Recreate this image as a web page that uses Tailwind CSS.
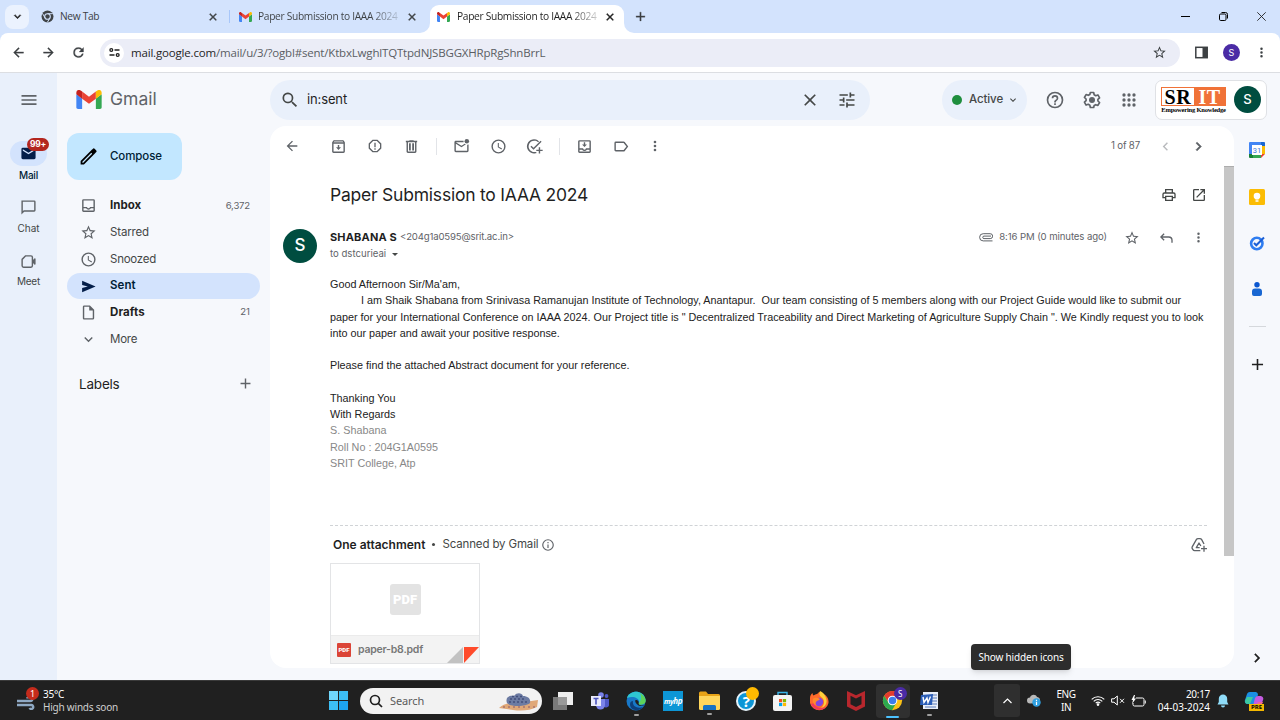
<!DOCTYPE html>
<html lang="en">
<head>
<meta charset="utf-8">
<title>Paper Submission to IAAA 2024 - Gmail</title>
<script src="https://cdn.jsdelivr.net/npm/@tailwindcss/browser@4"></script>
</head>
<body class="w-[1280px] h-[720px] overflow-hidden bg-[#f6f8fc] font-['Inter',sans-serif] text-[#1f1f1f] flex flex-col">
<svg class="hidden">
  <symbol id="gmail" viewBox="0 0 24 18"><path fill="#4285f4" d="M0 4v12.400C0 17.300.7 18 1.600 18H5.500V8z"/><path fill="#34a853" d="M18.500 18h3.900c.9 0 1.600-.7 1.600-1.600V4l-5.500 4z"/><path fill="#ea4335" d="M5.500 1.500 12 6.400l6.500-4.900V8.200L12 13 5.500 8.200z"/><path fill="#c5221f" d="M0 2.500C0 .4 2.400-.8 4.100.5L5.500 1.500v6.700L0 4.100z"/><path fill="#fbbc04" d="M18.500 1.500 19.900.5C21.600-.8 24 .4 24 2.500v1.600l-5.500 4.100z"/></symbol>
  <symbol id="chrome" viewBox="0 0 24 24"><circle cx="12" cy="12" r="11" fill="#fbc116"/><path fill="#e33b2e" d="M2.500 6.500A11 11 0 0 1 21.500 6.500L12 7 7.500 14.500z"/><path fill="#2da94f" d="M2.500 6.500A11 11 0 0 0 11.500 23l5-8.500L12 17l-4.500-2.500z"/><circle cx="12" cy="12" r="5.500" fill="#fff"/><circle cx="12" cy="12" r="4.300" fill="#3b7ded"/></symbol>
  <symbol id="x" viewBox="0 0 24 24"><path d="M19 6.410 17.590 5 12 10.590 6.410 5 5 6.410 10.590 12 5 17.590 6.410 19 12 13.410 17.590 19 19 17.590 13.410 12z"/></symbol>
  <symbol id="plus" viewBox="0 0 24 24"><path d="M19 13h-6v6h-2v-6H5v-2h6V5h2v6h6z"/></symbol>
  <symbol id="back" viewBox="0 0 24 24"><path d="M20 11H7.830l5.590-5.590L12 4l-8 8 8 8 1.410-1.410L7.830 13H20z"/></symbol>
  <symbol id="reload" viewBox="0 0 24 24"><path d="M17.650 6.350A7.960 7.960 0 0 0 12 4a8 8 0 1 0 7.730 10h-2.080A6 6 0 1 1 12 6c1.660 0 3.140.69 4.220 1.780L13 11h7V4z"/></symbol>
  <symbol id="star" viewBox="0 0 24 24"><path d="m22 9.240-7.190-.62L12 2 9.190 8.630 2 9.240l5.460 4.730L5.820 21 12 17.270 18.180 21l-1.630-7.030zM12 15.400l-3.760 2.270 1-4.280-3.320-2.880 4.380-.38L12 6.100l1.710 4.040 4.380.38-3.320 2.880 1 4.280z"/></symbol>
  <symbol id="dots" viewBox="0 0 24 24"><path d="M12 8a2 2 0 1 0 0-4 2 2 0 0 0 0 4m0 2a2 2 0 1 0 0 4 2 2 0 0 0 0-4m0 6a2 2 0 1 0 0 4 2 2 0 0 0 0-4"/></symbol>
  <symbol id="menu" viewBox="0 0 24 24"><path d="M3 18h18v-2H3zm0-5h18v-2H3zm0-7v2h18V6z"/></symbol>
  <symbol id="search" viewBox="0 0 24 24"><path d="M15.500 14h-.79l-.28-.27a6.500 6.500 0 1 0-.7.700l.27.280v.79l5 4.990L20.490 19zm-6 0a4.500 4.500 0 1 1 0-9 4.500 4.500 0 0 1 0 9"/></symbol>
  <symbol id="tune" viewBox="0 0 24 24"><path d="M3 17v2h6v-2zM3 5v2h10V5zm10 16v-2h8v-2h-8v-2h-2v6zM7 9v2H3v2h4v2h2V9zm14 4v-2H11v2zm-6-4h2V7h4V5h-4V3h-2z"/></symbol>
  <symbol id="down" viewBox="0 0 24 24"><path d="M7.410 8.590 12 13.170l4.590-4.580L18 10l-6 6-6-6z"/></symbol>
  <symbol id="help" viewBox="0 0 24 24"><path d="M11 18h2v-2h-2zm1-16a10 10 0 1 0 0 20 10 10 0 0 0 0-20m0 18a8 8 0 1 1 0-16 8 8 0 0 1 0 16m0-14a4 4 0 0 0-4 4h2a2 2 0 1 1 4 0c0 2-3 1.750-3 5h2c0-2.250 3-2.500 3-5a4 4 0 0 0-4-4"/></symbol>
  <symbol id="gear" viewBox="0 0 24 24"><path fill="none" stroke="currentColor" stroke-width="2" stroke-linejoin="round" d="M10 3h4l.6 2.700 1.900 1.100 2.600-.9 2 3.500-2 1.800v2l2 1.800-2 3.500-2.600-.9-1.900 1.100L14 21h-4l-.6-2.700-1.900-1.100-2.600.9-2-3.500 2-1.800v-2l-2-1.800 2-3.500 2.600.9 1.900-1.100z"/><circle cx="12" cy="12" r="3.600"/></symbol>
  <symbol id="apps" viewBox="0 0 24 24"><path d="M6 8a2 2 0 1 0 0-4 2 2 0 0 0 0 4m6 12a2 2 0 1 0 0-4 2 2 0 0 0 0 4m-6 0a2 2 0 1 0 0-4 2 2 0 0 0 0 4m0-6a2 2 0 1 0 0-4 2 2 0 0 0 0 4m6 0a2 2 0 1 0 0-4 2 2 0 0 0 0 4m6-6a2 2 0 1 0 0-4 2 2 0 0 0 0 4m-6 0a2 2 0 1 0 0-4 2 2 0 0 0 0 4m6 6a2 2 0 1 0 0-4 2 2 0 0 0 0 4m0 6a2 2 0 1 0 0-4 2 2 0 0 0 0 4"/></symbol>
  <symbol id="clock" viewBox="0 0 24 24"><path d="M12 2a10 10 0 1 0 0 20 10 10 0 0 0 0-20m0 18a8 8 0 1 1 0-16 8 8 0 0 1 0 16m.5-13H11v6l5.200 3.200.8-1.300-4.500-2.700z"/></symbol>
  <symbol id="inbox" viewBox="0 0 24 24"><path d="M19 3H5a2 2 0 0 0-2 2v14c0 1.100.9 2 2 2h14a2 2 0 0 0 2-2V5a2 2 0 0 0-2-2m0 16H5v-3h3.560a4 4 0 0 0 6.880 0H19zm0-5h-5a2 2 0 1 1-4 0H5V5h14z"/></symbol>
</svg>

<!-- Tab strip -->
<div class="h-[33px] shrink-0 bg-[#d3e3fd] flex items-end font-['Open_Sans',sans-serif] text-[10.2px] text-[#3c4043]">
  <div class="w-[430px] h-[33px] bg-white">
    <div class="flex h-[33px] w-[430px] rounded-br-[10px] bg-[#d3e3fd] items-center">
      <div class="ml-[5px] size-[24px] rounded-[8px] bg-[#ebf2fe] flex items-center justify-center"><svg class="size-[13px] fill-[#1f1f1f] stroke-[#1f1f1f]"><use href="#down"/></svg></div>
      <svg class="ml-[12px] size-[13px]" viewBox="0 0 24 24"><circle cx="12" cy="12" r="11" fill="#3f4347"/><circle cx="12" cy="12" r="5.200" fill="none" stroke="#d3e3fd" stroke-width="2"/><path stroke="#d3e3fd" stroke-width="1.800" d="M12 6.800h9.800M7.500 14.600 2.600 6.200M16.500 14.600l-4.900 8.400"/></svg>
      <span class="ml-[6px] w-[140px] tracking-[-0.310px]">New Tab</span>
      <svg class="ml-[7px] size-[12px] fill-[#3c4043] stroke-[#3c4043]"><use href="#x"/></svg>
      <span class="ml-[10px] w-px h-[13px] bg-[#a8c7fa]"></span>
      <svg class="ml-[9px] w-[13px] h-[10px]"><use href="#gmail"/></svg>
      <span class="ml-[6px] w-[140px] whitespace-nowrap tracking-[-0.310px] bg-linear-to-r from-[#3c4043] from-80% to-[#3c4043]/20 bg-clip-text text-transparent">Paper Submission to IAAA 2024</span>
      <svg class="ml-[8px] size-[12px] fill-[#3c4043] stroke-[#3c4043]"><use href="#x"/></svg>
    </div>
  </div>
  <div class="h-[28px] w-[194px] rounded-t-[9px] bg-white flex items-center pb-[5px] text-[#1f1f1f]">
    <svg class="ml-[7px] w-[13px] h-[10px]"><use href="#gmail"/></svg>
    <span class="ml-[7px] w-[140px] whitespace-nowrap tracking-[-0.310px] bg-linear-to-r from-[#1f1f1f] from-80% to-[#1f1f1f]/20 bg-clip-text text-transparent">Paper Submission to IAAA 2024</span>
    <svg class="ml-[7px] size-[12px] fill-[#1f1f1f] stroke-[#1f1f1f]"><use href="#x"/></svg>
  </div>
  <div class="h-[33px] flex-1 bg-white">
    <div class="flex h-[33px] rounded-bl-[10px] bg-[#d3e3fd] items-center">
      <svg class="ml-[9px] size-[15px] fill-[#3c4043] stroke-[#3c4043] stroke-[.5]"><use href="#plus"/></svg>
      <div class="ml-auto mr-[14px] flex items-center gap-[29px]">
        <span class="w-[9px] h-px bg-black"></span>
        <svg class="size-[9px]" viewBox="0 0 9 9" fill="none" stroke="#000"><rect x=".5" y="2" width="6.500" height="6.500" rx="1.200"/><path d="M2.500.5H6.500a2 2 0 0 1 2 2V6.500"/></svg>
        <svg class="size-[9px]" viewBox="0 0 9 9" stroke="#222" stroke-width=".9"><path d="m.3.3 8.400 8.400M8.700.3.300 8.700"/></svg>
      </div>
    </div>
  </div>
</div>

<!-- Address bar -->
<div class="h-[40px] shrink-0 bg-[#d3e3fd]"><div class="h-[40px] bg-white rounded-t-[8px] border-b border-[#dcdee2] flex items-center">
  <svg class="ml-[11px] size-[15px] fill-[#3c4043] stroke-[#3c4043] stroke-[.5]"><use href="#back"/></svg>
  <svg class="ml-[15px] size-[15px] fill-[#3c4043] stroke-[#3c4043] stroke-[.5] rotate-180"><use href="#back"/></svg>
  <svg class="ml-[15px] size-[15px] fill-[#3c4043] stroke-[#3c4043] stroke-[.5]"><use href="#reload"/></svg>
  <div class="ml-[14px] w-[1080px] h-[28px] rounded-full bg-[#ebedf7] flex items-center">
    <div class="ml-[4px] size-[20px] rounded-full bg-white flex items-center justify-center"><svg class="size-[11px]" viewBox="0 0 11 11" fill="none" stroke="#1f1f1f" stroke-width="1.300"><circle cx="2.300" cy="3" r="1.400"/><path d="M5.500 3h5M.5 8h5"/><circle cx="8.700" cy="8" r="1.400"/></svg></div>
    <span class="ml-[7px] font-['Open_Sans',sans-serif] text-[11.5px] tracking-[-0.180px] text-[#5a5d63] whitespace-nowrap"><span class="text-[#1f1f1f]">mail.google.com</span>/mail/u/3/?ogbl#sent/KtbxLwghlTQTtpdNJSBGGXHRpRgShnBrrL</span>
    <svg class="ml-auto mr-[13px] size-[15px] fill-[#3c4043]"><use href="#star"/></svg>
  </div>
  <svg class="ml-[15px] size-[13px]" viewBox="0 0 13 13"><rect x=".8" y="1.300" width="11.400" height="10.400" fill="none" stroke="#3c4043" stroke-width="1.500"/><path fill="#3c4043" d="M7.500 1h5v11h-5z"/></svg>
  <span class="ml-[15px] size-[17px] rounded-full bg-[#4a2ba5] text-white text-[9px] flex items-center justify-center">S</span>
  <svg class="ml-[14px] size-[15px] fill-[#3c4043]"><use href="#dots"/></svg>
</div></div>

<div class="flex h-[607px] shrink-0">
  <!-- App rail -->
  <div class="w-[57px] bg-[#e9f0fb] flex flex-col items-center text-[10px] text-[#444746]">
    <svg class="mt-[17px] size-[20px] fill-[#5f6368]"><use href="#menu"/></svg>
    <div class="relative mt-[31px] w-[37px] h-[25px] rounded-full bg-[#d3e3fd] flex items-center justify-center">
      <svg class="size-[17px] fill-[#041e49]" viewBox="0 0 24 24"><path d="M20 4H4a2 2 0 0 0-2 2v12c0 1.100.9 2 2 2h16a2 2 0 0 0 2-2V6a2 2 0 0 0-2-2m0 4-8 5-8-5V6l8 5 8-5z"/></svg>
      <span class="absolute left-[17px] -top-[3px] w-[22px] h-[13px] rounded-full bg-[#b3261e] text-white font-bold text-[8.500px] leading-[13px] text-center tracking-[-0.200px]">99+</span>
    </div>
    <span class="mt-[2px] leading-[14px] text-[#001d35] font-medium tracking-[-0.200px]">Mail</span>
    <svg class="mt-[17px] size-[17px] fill-[#5f6368]" viewBox="0 0 24 24"><path d="M2 2v20l4-4h14a2 2 0 0 0 2-2V4a2 2 0 0 0-2-2zm2 2h16v12H5.200L4 17.200z"/></svg>
    <span class="mt-[5px] leading-[14px]">Chat</span>
    <svg class="mt-[18px] size-[17px]" viewBox="0 0 24 24" fill="none" stroke="#5f6368" stroke-width="2" stroke-linejoin="round"><path d="M8 4h7.500a2 2 0 0 1 2 2v12a2 2 0 0 1-2 2H5a2 2 0 0 1-2-2V9z"/><path d="m18 11.500 3-3v7l-3-3z" fill="#5f6368"/></svg>
    <span class="mt-[4px] leading-[14px] tracking-[-0.200px]">Meet</span>
  </div>

  <!-- Folder column -->
  <div class="w-[213px] pl-[10px] flex flex-col text-[11.500px]">
    <div class="h-[53px] flex items-center pl-[9px]">
      <svg class="w-[26px] h-[19px]"><use href="#gmail"/></svg>
      <span class="ml-[8px] text-[17.500px] text-[#5f6368]">Gmail</span>
    </div>
    <div class="mt-[7px] w-[115px] h-[47px] rounded-[12px] bg-[#c2e7ff] flex items-center text-[#001d35] font-medium">
      <svg class="ml-[11px] size-[21px]" viewBox="0 0 24 24"><path d="M3 17.200V21h3.800L19.600 8.200l-3.800-3.800zM6 19H5v-1L15.200 7.800l1 1zM20.900 6.900a1.400 1.400 0 0 0 0-1.900l-1.900-1.900a1.400 1.400 0 0 0-1.900 0L14 6.200 17.800 10z"/></svg>
      <span class="ml-[11px] tracking-[-0.090px]">Compose</span>
    </div>
    <div class="mt-[12.600px] w-[193px] flex flex-col text-[#444746] fill-[#5f6368]">
      <div class="h-[26.700px] flex items-center pl-[13px] pr-[10px] text-[#1f1f1f] font-bold"><svg class="size-[17px]"><use href="#inbox"/></svg><span class="ml-[13px]">Inbox</span><span class="ml-auto text-[9.600px] font-normal tracking-[-0.200px] text-[#5f6368]">6,372</span></div>
      <div class="h-[26.700px] flex items-center pl-[13px]"><svg class="size-[17px]"><use href="#star"/></svg><span class="ml-[13px] tracking-[-0.160px]">Starred</span></div>
      <div class="h-[26.700px] flex items-center pl-[13px]"><svg class="size-[17px]"><use href="#clock"/></svg><span class="ml-[13px] tracking-[-0.250px]">Snoozed</span></div>
      <div class="h-[26.700px] flex items-center pl-[13px] rounded-full bg-[#d3e3fd] text-[#001d35] font-semibold"><svg class="size-[17px] fill-[#041e49]" viewBox="0 0 24 24"><path d="M3 20v-6l8-2-8-2V4l19 8z"/></svg><span class="ml-[13px] tracking-[0.100px]">Sent</span></div>
      <div class="h-[26.700px] flex items-center pl-[13px] pr-[10px] text-[#1f1f1f] font-bold"><svg class="size-[17px]" viewBox="0 0 24 24"><path d="M14 2H6a2 2 0 0 0-2 2v16c0 1.100.9 2 2 2h12a2 2 0 0 0 2-2V8zM6 20V4h7v5h5v11z"/></svg><span class="ml-[13px] tracking-[0.100px]">Drafts</span><span class="ml-auto text-[9.600px] font-normal text-[#5f6368]">21</span></div>
      <div class="h-[26.700px] flex items-center pl-[13px]"><svg class="size-[17px]"><use href="#down"/></svg><span class="ml-[13px] tracking-[-0.250px]">More</span></div>
    </div>
    <div class="mt-[21px] h-[20px] pl-[12px] pr-[16px] flex items-center text-[13.500px] tracking-[-0.200px] text-[#1f1f1f]">Labels<svg class="ml-auto size-[17px] fill-[#5f6368]"><use href="#plus"/></svg></div>
  </div>

  <!-- Search header and message -->
  <div class="flex-1 flex flex-col">
    <div class="h-[53px] flex items-center fill-[#444746]">
      <div class="w-[600px] h-[40px] rounded-full bg-[#e9f0fb] flex items-center">
        <svg class="ml-[10px] size-[20px]"><use href="#search"/></svg>
        <span class="ml-[7px] text-[13px] tracking-[-0.130px]">in:sent</span>
        <svg class="ml-auto size-[20px]"><use href="#x"/></svg>
        <svg class="ml-[17px] mr-[13px] size-[20px]"><use href="#tune"/></svg>
      </div>
      <div class="ml-[72px] w-[85px] h-[40px] rounded-full bg-[#e9f0fb] flex items-center">
        <span class="ml-[10px] size-[10px] rounded-full bg-[#1e8e3e]"></span>
        <span class="ml-[7px] text-[11.500px] tracking-[-0.100px] text-[#444746] font-medium">Active</span>
        <svg class="ml-[4px] size-[12px]"><use href="#down"/></svg>
      </div>
      <svg class="ml-[18px] size-[20px] fill-[#5f6368]"><use href="#help"/></svg>
      <svg class="ml-[17px] size-[20px] fill-[#5f6368] text-[#5f6368]"><use href="#gear"/></svg>
      <svg class="ml-[17px] size-[20px] fill-[#5f6368]"><use href="#apps"/></svg>
      <div class="ml-[16px] w-[112px] h-[40px] rounded-[7px] bg-white border border-[#dfe1e5] flex items-center">
        <div class="ml-[5px] w-[65px] h-[26px] flex flex-col items-center font-['Liberation_Serif',serif]">
          <div class="w-[65px] h-[19px] flex border border-[#f07238] text-[20px] leading-[18px] font-bold"><span class="w-[32px] text-center text-black tracking-[0.800px]">SR</span><span class="flex-1 bg-[#f07238] text-white text-center tracking-[0.400px]">IT</span></div>
          <span class="text-[6.500px] leading-[8px] text-black font-bold whitespace-nowrap tracking-[-0.200px]">Empowering Knowledge</span>
        </div>
        <span class="ml-[8px] size-[27px] rounded-full bg-[#004d40] text-white text-[13px] font-medium flex items-center justify-center">S</span>
      </div>
    </div>

    <div class="flex">
      <div class="w-[964px] h-[542px] rounded-[16px] bg-white overflow-hidden flex flex-col">
        <div class="h-[40px] shrink-0 flex items-center fill-[#5f6368]">
          <svg class="ml-[14px] size-[16px]"><use href="#back"/></svg>
          <div class="ml-[20px] flex items-center">
            <span class="w-[36.700px] flex justify-center"><svg class="size-[17px]" viewBox="0 0 24 24"><path d="M20.500 5.200 19.200 3.500A1.500 1.500 0 0 0 18 3H6a1.500 1.500 0 0 0-1.200.5L3.500 5.200A2 2 0 0 0 3 6.500V19c0 1.100.9 2 2 2h14a2 2 0 0 0 2-2V6.500a2 2 0 0 0-.5-1.300M19 19H5V8h14zM5 6l1-1h12l1 1zM11 10v3H8.500l3.500 4 3.500-4H13v-3z"/></svg></span>
            <span class="w-[36.700px] flex justify-center"><svg class="size-[16px]" viewBox="0 0 24 24"><path d="M8.300 2.500h7.400l5.800 5.800v7.400l-5.800 5.800H8.300l-5.800-5.800V8.300zm.9 2L4.500 9.200v5.600l4.700 4.700h5.600l4.700-4.700V9.200l-4.700-4.700zM11 7h2v7h-2zm0 8.500h2v2h-2z"/></svg></span>
            <span class="w-[36.700px] flex justify-center"><svg class="size-[17px]" viewBox="0 0 24 24"><path d="M15 4V3H9v1H4v2h1v13c0 1.100.9 2 2 2h10a2 2 0 0 0 2-2V6h1V4zm2 15H7V6h10zM8.500 7.500h2.500v10H8.500zm4.500 0h2.500v10H13z"/></svg></span>
            <span class="w-[13px] flex justify-center"><i class="w-px h-[17px] bg-[#e2e4e8]"></i></span>
            <span class="w-[36.700px] flex justify-center"><svg class="size-[17px]" viewBox="0 0 24 24"><path d="M22 9v9a2 2 0 0 1-2 2H4a2 2 0 0 1-2-2V6c0-1.100.9-2 2-2h11a4 4 0 0 0 0 2H4l8 5 4.500-2.800c.5.400 1.100.600 1.700.700L12 13 4 8v10h16V9.500z"/><circle cx="19.500" cy="4.500" r="3.200"/></svg></span>
            <span class="w-[36.700px] flex justify-center"><svg class="size-[17px]"><use href="#clock"/></svg></span>
            <span class="w-[36.700px] flex justify-center"><svg class="size-[17px]" viewBox="0 0 24 24"><path d="M22 5.200 10.600 16.600l-4.300-4.300 1.400-1.400 2.900 2.900 10-10zM18.400 4.800A10 10 0 1 0 12 21.800c1.200 0 2.300-.2 3.300-.6l-1.500-1.600A8 8 0 1 1 17 5.900zM18 13v3.500h-3.500v2H18V22h2v-3.500h3.500v-2H20V13z"/></svg></span>
            <span class="w-[13px] flex justify-center"><i class="w-px h-[17px] bg-[#e2e4e8]"></i></span>
            <span class="w-[36.700px] flex justify-center"><svg class="size-[17px]" viewBox="0 0 24 24"><path d="M19 3H5a2 2 0 0 0-2 2v14c0 1.100.9 2 2 2h14a2 2 0 0 0 2-2V5a2 2 0 0 0-2-2m0 16H5v-2.500h3.600a4 4 0 0 0 6.800 0H19zm0-4.500h-5a2 2 0 1 1-4 0H5V5h14zM11 6v3H8.500l3.500 3.700L15.500 9H13V6z"/></svg></span>
            <span class="w-[36.700px] flex justify-center"><svg class="size-[17px]" viewBox="0 0 24 24"><path d="M16.600 5.800A2 2 0 0 0 15 5H4a2 2 0 0 0-2 2v10c0 1.100.9 2 2 2h11c.700 0 1.300-.3 1.600-.8L21.500 12zM15 17H4V7h11l4 5z"/></svg></span>
            <span class="w-[30px] flex justify-center"><svg class="size-[16px]"><use href="#dots"/></svg></span>
          </div>
          <span class="ml-auto text-[9.700px] tracking-[-0.170px] text-[#5f6368]">1 of 87</span>
          <svg class="ml-[17px] size-[17px] fill-[#b9bbbe] rotate-90"><use href="#down"/></svg>
          <svg class="ml-[16px] mr-[27px] size-[17px] stroke-[#5f6368] -rotate-90"><use href="#down"/></svg>
        </div>

        <div class="flex flex-1 min-h-0 overflow-hidden">
          <div class="w-[954px] shrink-0 flex flex-col">
            <div class="h-[58px] shrink-0 pl-[60px] pr-[17px] flex items-center">
              <span class="text-[17.500px] tracking-[-0.220px]">Paper Submission to IAAA 2024</span>
              <svg class="ml-auto size-[16px] fill-[#444746]" viewBox="0 0 24 24"><path d="M19 8h-1V3H6v5H5a3 3 0 0 0-3 3v6h4v4h12v-4h4v-6a3 3 0 0 0-3-3M8 5h8v3H8zm8 14H8v-4h8zm2-4v-2H6v2H4v-4a1 1 0 0 1 1-1h14a1 1 0 0 1 1 1v4z"/></svg>
              <svg class="ml-[14px] size-[16px] fill-[#444746]" viewBox="0 0 24 24"><path d="M19 19H5V5h7V3H5a2 2 0 0 0-2 2v14c0 1.100.9 2 2 2h14a2 2 0 0 0 2-2v-7h-2zM14 3v2h3.590l-9.830 9.830 1.410 1.410L19 6.410V10h2V3z"/></svg>
            </div>
            <div class="h-[52px] shrink-0 flex">
              <span class="ml-[13px] mt-[5px] size-[34px] rounded-full bg-[#004d40] text-white text-[17px] font-medium flex items-center justify-center">S</span>
              <div class="ml-[13px] flex-1 flex flex-col text-[9.600px] text-[#5f6368]">
                <div class="h-[27px] pr-[18px] flex items-center">
                  <span class="text-[11px] font-bold tracking-[0.160px] text-[#1f1f1f]">SHABANA S</span>
                  <span class="ml-[3px] tracking-[-0.160px]">&lt;204g1a0595@srit.ac.in&gt;</span>
                  <svg class="ml-auto w-[14px] h-[9px]" viewBox="0 0 14 9" fill="none" stroke="#5f6368"><path d="M13.500 7.900H4.200a3.600 3.600 0 0 1 0-7.200h7a2.400 2.400 0 0 1 0 4.900H5a1.200 1.200 0 0 1 0-2.500h7"/></svg>
                  <span class="ml-[6px] tracking-[-0.090px]">8:16 PM (0 minutes ago)</span>
                  <svg class="ml-[17px] size-[16px] fill-[#5f6368]"><use href="#star"/></svg>
                  <svg class="ml-[18px] size-[16px] fill-[#5f6368]" viewBox="0 0 24 24"><path d="M8.500 5 3 10.500 8.500 16l1.400-1.400-3.100-3.100H16a4 4 0 0 1 4 4V19h2v-3.500a6 6 0 0 0-6-6H6.800l3.100-3.100z"/></svg>
                  <svg class="ml-[17px] size-[15px] fill-[#5f6368]"><use href="#dots"/></svg>
                </div>
                <div class="mt-[-3px] h-[12px] flex items-center">to dstcurieai<i class="ml-[6px] border-x-[3.500px] border-x-transparent border-t-[3.500px] border-t-[#444746]"></i></div>
              </div>
            </div>
            <div class="shrink-0 h-[250px] ml-[60px] w-[877px] border-b border-dashed border-[#d0d3d6] font-['Liberation_Sans',Arial,sans-serif] text-[10.810px] leading-[16.250px] text-[#222] whitespace-nowrap">
              <p>Good Afternoon Sir/Ma'am,</p>
              <p class="pl-[31px]">I am Shaik Shabana from Srinivasa Ramanujan Institute of Technology, Anantapur.&nbsp; Our team consisting of 5 members along with our Project Guide would like to submit our</p>
              <p>paper for your International Conference on IAAA 2024. Our Project title is " Decentralized Traceability and Direct Marketing of Agriculture Supply Chain ". We Kindly request you to look</p>
              <p>into our paper and await your positive response.</p>
              <p class="mt-[16.250px]">Please find the attached Abstract document for your reference.</p>
              <p class="mt-[16.250px]">Thanking You</p>
              <p>With Regards</p>
              <div class="text-[#888]">
                <p>S. Shabana</p>
                <p>Roll No : 204G1A0595</p>
                <p>SRIT College, Atp</p>
              </div>
            </div>
            <div class="h-[37px] shrink-0 pl-[63px] pr-[17px] flex items-center text-[11.500px] text-[#444746]">
              <span class="text-[12px] font-semibold text-[#1f1f1f]">One attachment</span>
              <span class="mx-[7px] size-[3px] rounded-full bg-[#444746]"></span>
              <span class="tracking-[-0.140px]">Scanned by Gmail</span>
              <svg class="ml-[3px] size-[14px] fill-[#5f6368]" viewBox="0 0 24 24"><path d="M11 7h2v2h-2zm0 4h2v6h-2zm1-9a10 10 0 1 0 0 20 10 10 0 0 0 0-20m0 18a8 8 0 1 1 0-16 8 8 0 0 1 0 16"/></svg>
              <svg class="ml-auto size-[16px]" viewBox="0 0 24 24" fill="none" stroke="#5f6368" stroke-width="2" stroke-linejoin="round"><path d="M14 20.500H5.500a3 3 0 0 1-2.600-1.500L2 17.500a3 3 0 0 1 0-3L8 4a3 3 0 0 1 2.600-1.500h2.800A3 3 0 0 1 16 4l3.500 6.500"/><path d="M13 16H8l4-7 2.800 4.500M19.500 13v9M15 17.500h9"/></svg>
            </div>
            <div class="ml-[60px] h-[101px] w-[150px] shrink-0 border border-[#e3e4e6] flex flex-col">
              <div class="h-[71px] flex items-center justify-center"><span class="size-[31px] rounded-[3px] bg-[#e3e3e3] text-white font-['Roboto',sans-serif] font-black text-[13px] flex items-center justify-center">PDF</span></div>
              <div class="flex-1 bg-[#f3f3f3] border-t border-[#ebebeb] flex items-center pl-[6px]">
                <span class="size-[14px] rounded-[1px] bg-[#db4437] text-white font-['Roboto',sans-serif] font-black text-[6px] flex items-center justify-center">PDF</span>
                <span class="ml-[7px] text-[10.500px] font-semibold tracking-[-0.220px] text-[#777]">paper-b8.pdf</span>
                <svg class="ml-auto self-end w-[32px] h-[16px]" viewBox="0 0 32 16"><path fill="#c2c2c2" d="M0 16 16 0v16z"/><path fill="#ff4b2b" d="M17 0h15L17 16z"/></svg>
              </div>
            </div>
          </div>
          <div class="w-[10px] shrink-0 h-[390px] bg-[#c6c6c6] border-t border-[#adadad]"></div>
        </div>
      </div>

      <!-- Side panel -->
      <div class="w-[46px] h-[554px] flex flex-col items-center">
        <svg class="mt-[16px] size-[16px]" viewBox="0 0 16 16"><path fill="#4285f4" d="M1 0h11v4H4v8H0V1a1 1 0 0 1 1-1"/><path fill="#1967d2" d="M12 0h3a1 1 0 0 1 1 1v3h-4z"/><path fill="#fbbc04" d="M12 4h4v8h-4z"/><path fill="#188038" d="M0 12h4v4H1a1 1 0 0 1-1-1z"/><path fill="#34a853" d="M4 12h8v4H4z"/><path fill="#ea4335" d="M12 12h4l-4 4z"/><path fill="#fff" d="M3 3h10v10H3z"/><text x="8" y="10.800" text-anchor="middle" font-family="Roboto" font-size="7.500" fill="#3c78d8">31</text></svg>
        <svg class="mt-[31px] size-[16px]" viewBox="0 0 16 16"><rect width="16" height="16" rx="1.500" fill="#fbbc04"/><circle cx="8" cy="7" r="3.300" fill="#fff"/><path fill="#fff" d="M6.300 9h3.400v1.600H6.300zM6.500 11.300h3v1.400h-3z"/></svg>
        <svg class="mt-[30px] size-[16px]" viewBox="0 0 16 16" fill="none" stroke-width="2.600"><circle cx="7.800" cy="8.500" r="5.700" stroke="#2f7df0"/><path stroke="#1a5fd6" stroke-width="2" d="m5 8 2.300 2.300L15 2.500"/></svg>
        <svg class="mt-[30px] size-[16px] fill-[#0b57d0]" viewBox="0 0 16 16"><circle cx="8" cy="3.800" r="2.700"/><path fill="#1967d2" d="M3 10.500A3 3 0 0 1 6 7.500h4a3 3 0 0 1 3 3V13a2 2 0 0 1-2 2H5a2 2 0 0 1-2-2z"/></svg>
        <span class="mt-[29px] w-[17px] h-px bg-[#d5d8dc]"></span>
        <svg class="mt-[28px] size-[19px] fill-[#1f1f1f]"><use href="#plus"/></svg>
        <svg class="mt-auto mb-[13px] size-[18px] fill-[#1f1f1f] stroke-[#1f1f1f] stroke-[.5] -rotate-90"><use href="#down"/></svg>
      </div>
    </div>
  </div>
</div>

<!-- Taskbar -->
<div class="relative h-[40px] shrink-0 bg-[#202020] border-t border-[#3a3a3a] flex items-center font-['Noto_Sans',sans-serif] text-[10px] leading-[13px] text-white">
  <span class="absolute left-[971px] top-[-37px] w-[100px] h-[26px] rounded-[4px] bg-[#2d2d2d] shadow-md flex items-center justify-center tracking-[-0.160px]">Show hidden icons</span>
  <div class="w-[320px] flex items-center pl-[16px]">
    <div class="relative w-[20px] h-[28px]"><svg class="mt-[10px] w-[20px] h-[13px]" viewBox="0 0 20 13" fill="none" stroke="#8fa9c4" stroke-width="2.400"><path d="M1 4h13a2.500 2.500 0 1 0-2.500-2.500M1 8h14.500a2 2 0 1 1-2 3"/></svg><span class="absolute left-[10px] top-0 size-[13px] rounded-full bg-[#c42b1c] text-[9px] leading-[13px] text-center">1</span></div>
    <div class="ml-[7px] flex flex-col"><span class="tracking-[-0.260px]">35°C</span><span class="text-[#cfcfcf] tracking-[-0.210px]">High winds soon</span></div>
  </div>
  <span class="w-[37px] flex justify-center"><svg class="size-[19px] fill-[#3cbef5]" viewBox="0 0 19 19"><path fill="#6fd6fb" d="M0 0h9v9H0z"/><path d="M10 0h9v9h-9zM0 10h9v9H0z"/><path fill="#1da4f0" d="M10 10h9v9h-9z"/></svg></span>
  <div class="ml-[3px] w-[182px] h-[26px] rounded-full bg-[#f2f2f2] flex items-center overflow-hidden text-[11px] tracking-[-0.100px] text-[#5a5a5a]">
    <svg class="ml-[9px] size-[14px]" viewBox="0 0 14 14" fill="none" stroke="#1f1f1f" stroke-width="1.700"><circle cx="6" cy="6" r="4.500"/><path d="m9.300 9.300 3.700 3.700"/></svg>
    <span class="ml-[7px]">Search</span>
    <svg class="ml-auto mr-[2px] w-[42px] h-[20px]" viewBox="0 0 42 20"><path fill="#e0a878" d="M1 17C5 13 12 11 20 12l20-3-1 7q-10 5-24 3z"/><path fill="#6c7ba3" d="M9 12c-2-5 2-8 7-7 3-4 8-3 9 0 5 0 8 3 7 7-4 4-20 4-23 0"/><path stroke="#43507c" stroke-width="1.500" stroke-dasharray="2 2" d="M12 8h16M11 11h19M14 5.500h10"/><path stroke="#8a5a6a" stroke-dasharray="2 3" d="M5 16h32"/></svg>
  </div>
  <div class="ml-[3px] flex items-center">
    <span class="w-[36.600px] flex justify-center"><svg class="w-[20px] h-[18px]" viewBox="0 0 20 18"><path fill="#eee" d="M5 0h15v13H5z"/><path fill="#8b8b8b" fill-opacity=".85" d="M0 5h14v13H0z"/></svg></span>
    <span class="w-[36.600px] flex justify-center"><svg class="w-[18px] h-[18px]" viewBox="0 0 18 18"><circle cx="10" cy="3" r="2.800" fill="#7b83eb"/><circle cx="15.500" cy="4" r="1.900" fill="#5059c9"/><path fill="#5059c9" d="M12 7h6v5a3 3 0 0 1-6 1z"/><path fill="#7b83eb" d="M5 7h9v6a4.500 4.500 0 0 1-9 0z"/><path fill="#e9eafa" d="M0 4h10v10H0z"/><path stroke="#4b53bc" stroke-width="1.600" d="M2.500 6.500h5M5 6.500v6"/></svg></span>
    <span class="relative w-[36.600px] flex justify-center"><svg class="size-[20px]" viewBox="0 0 20 20"><circle cx="10" cy="10" r="9.500" fill="#1878c8"/><path fill="#2ec6d2" d="M1 7C3-1 17-2 19.500 8c.5 4-3 6-7 5 3-5-5-9-11.500-6"/><path fill="#5fd35a" d="M14 2c4 2 7 7 5 10-2 2-5 2-7 1 3-2 4-7 2-11"/><path fill="#0d3f7c" d="M7 10c-1 5 4 8 10 6-4 5-12 4-13-2 0-3 1-4 3-4"/><path fill="#202020" d="M9 9.500c1-1 3-.5 3.500 1s-.5 2.500 1 3.500q3 1 5.500-.5c-3 3-9 1.500-10-4"/></svg><i class="absolute bottom-[-5px] w-[5px] h-[2px] rounded-full bg-[#a0a0a0]"></i></span>
    <span class="w-[36.600px] flex justify-center"><span class="size-[20px] bg-[#0d96d6] text-[7px] leading-[20px] text-center italic font-bold tracking-tighter">my<span class="text-[8px]">hp</span></span></span>
    <span class="relative w-[36.600px] flex justify-center"><svg class="w-[21px] h-[19px]" viewBox="0 0 21 19"><path fill="#e8a317" d="M0 2a1.500 1.500 0 0 1 1.500-1.500H7l2 2.500h10.500A1.500 1.500 0 0 1 21 4.500V10H0z"/><path fill="#ffd65c" d="M0 5h21v12.500a1.500 1.500 0 0 1-1.500 1.500h-18A1.500 1.500 0 0 1 0 17.500z"/><path fill="#1672c4" d="M4 19v-3.500A1.500 1.500 0 0 1 5.500 14h10a1.500 1.500 0 0 1 1.500 1.500V19z"/></svg><i class="absolute bottom-[-5px] w-[5px] h-[2px] rounded-full bg-[#a0a0a0]"></i></span>
    <span class="relative w-[36.600px] flex justify-center"><span class="size-[20px] rounded-full border-2 border-[#e6f3fa] bg-[#0d96d6] text-[15px] leading-[16px] font-bold text-center">?</span><i class="absolute left-[18px] top-[-4px] size-[13px] rounded-full bg-[#ffb900]"></i></span>
    <span class="w-[36.600px] flex justify-center"><svg class="w-[19px] h-[20px]" viewBox="0 0 19 20"><path fill="none" stroke="#39b5ea" stroke-width="1.400" d="M5 5V1.500h9V5"/><rect y="4" width="19" height="16" rx="2" fill="#f3f3f3"/><path fill="#f25022" d="M6 8h3.200v3.200H6z"/><path fill="#7fba00" d="M9.900 8h3.200v3.200H9.900z"/><path fill="#00a4ef" d="M6 11.900h3.200v3.200H6z"/><path fill="#ffb900" d="M9.900 11.900h3.200v3.200H9.900z"/></svg></span>
    <span class="w-[36.600px] flex justify-center"><svg class="size-[20px]" viewBox="0 0 20 20"><path fill="#ff6a2b" d="M1 7c0-2 1-4 2.500-5 0 1 .5 2 1 2.500C7 3 9 3 10 1c3 1 4 2 5 4 1-1 0-2 0-2 3 2 5 5 4.500 9A9.500 9.500 0 0 1 1 12z"/><path fill="#ffcf3a" d="M11 0c4 2 5 4 6 7 2 5-1 9-5 10 4-3 4-9 0-11-2-2-2-4-1-6"/><path fill="#f33a5b" d="M2 13a9 9 0 0 0 15 3c-5 2-10 1-12-4z"/><circle cx="10" cy="11" r="4.200" fill="#8346dd"/><path fill="#ff8a2b" d="M4 8c2-2 5-1 7 0-1 2-3 1-4 3s0 3 1 4c-3-1-5-4-4-7"/></svg></span>
    <span class="w-[36.600px] flex justify-center"><svg class="w-[18px] h-[20px]" viewBox="0 0 18 20"><path fill="#b8272d" d="m0 0 9 4.200L18 0v15.500L9 20l-9-4.500zm3.500 4.800v8.500L9 16l5.500-2.700V4.800L9 7.500z"/></svg></span>
    <span class="relative w-[34px] mx-[1.300px] h-[34px] rounded-[4px] bg-[#303030] flex items-center justify-center"><svg class="size-[21px]"><use href="#chrome"/></svg><span class="absolute left-[18px] top-[3px] size-[13px] rounded-full bg-[#4a2ba5] text-[8px] leading-[13px] text-center">S</span><i class="absolute bottom-0 w-[13px] h-[2px] rounded-full bg-[#4cc2ff]"></i></span>
    <span class="relative w-[36.600px] flex justify-center"><svg class="w-[20px] h-[20px]" viewBox="0 0 20 20"><path fill="#e9eef7" d="M4 1h15v17H4z"/><path stroke="#5a7ab8" d="M13 4h5M13 7h5M13 10h5M13 13h5M6 16h11"/><path fill="#2b5eb8" d="m2 4 12-1-1 11H1z"/><path fill="none" stroke="#fff" stroke-width="1.400" d="m4 6 1 5.500L8 7l1 4.500L11.500 5.500"/></svg><i class="absolute bottom-[-5px] w-[5px] h-[2px] rounded-full bg-[#a0a0a0]"></i></span>
  </div>
  <span class="ml-auto w-[26px] h-[33px] rounded-[3px] bg-[#2f2f2f] flex items-center justify-center"><svg class="w-[9px] h-[6px]" viewBox="0 0 9 6" fill="none" stroke="#fff" stroke-width="1.200"><path d="m.5 5 4-4 4 4"/></svg></span>
  <svg class="ml-[7px] w-[14px] h-[13px]" viewBox="0 0 14 13"><path fill="#b8b8b8" d="M3 9.500a3 3 0 0 1 0-6C4 0 9 0 10 3c3 0 4 4 2 6z"/><circle cx="9.500" cy="8.500" r="4.200" fill="#2f9fe0"/><path stroke="#fff" stroke-width="1.200" d="M9.500 7.800V11M9.500 5.800V7"/></svg>
  <div class="ml-[15px] w-[20px] flex flex-col items-center tracking-[-0.400px]"><span>ENG</span><span>IN</span></div>
  <svg class="ml-[15px] w-[14px] h-[11px]" viewBox="0 0 14 11" fill="none" stroke="#fff" stroke-width="1.100"><path d="M.7 4.300a9 9 0 0 1 12.600 0M2.700 6.300a6.200 6.200 0 0 1 8.600 0M4.700 8.200a3.400 3.400 0 0 1 4.600 0"/><circle cx="7" cy="9.600" r=".8" fill="#fff"/></svg>
  <svg class="ml-[6px] w-[14px] h-[11px]" viewBox="0 0 14 11" fill="none" stroke="#fff"><path d="M.6 3.800h2.400L6.300 1v9L3 7.200H.6zM9 3.800l4 4M13 3.800l-4 4"/></svg>
  <svg class="ml-[6px] w-[15px] h-[12px]" viewBox="0 0 15 12" fill="none" stroke="#fff"><path d="M5 3h6.500a1.500 1.500 0 0 1 1.500 1.500v5a1.500 1.500 0 0 1-1.500 1.500h-8A1.500 1.500 0 0 1 2 9.500V8M14.300 5.500v3"/><path fill="#fff" stroke="none" d="M3 0 .5 5H2L1 9l4-5.500H3.200L4 0z"/></svg>
  <div class="ml-[12px] w-[52px] flex flex-col items-end"><span class="tracking-[-0.300px]">20:17</span><span class="whitespace-nowrap">04-03-2024</span></div>
  <svg class="ml-[7px] w-[12px] h-[14px]" viewBox="0 0 12 14" fill="#8fdcf8"><path d="M6 .5a4.200 4.200 0 0 1 4.200 4.200V8l1.300 2.500H.5L1.800 8V4.700A4.200 4.200 0 0 1 6 .5M4 11.500h4a2 2 0 0 1-4 0"/></svg>
  <div class="relative ml-[15px] mr-[16px] w-[20px] h-[20px]"><svg class="size-[20px]" viewBox="0 0 20 20"><path fill="#1a8fe3" d="M6 1h6a3 3 0 0 1 2 3l-4 9H3a3 3 0 0 1-2-4l2-6a3 3 0 0 1 3-2"/><path fill="#3dc9a0" d="M3 6 1 10a3 3 0 0 0 2 3h3l3-7z"/><path fill="#c45be0" d="M14 5h3a3 3 0 0 1 2 4l-2 6H9l2-8q1-2 3-2"/><path fill="#f0679a" d="M14 11h5l-2 4h-5z"/></svg><span class="absolute left-[5px] top-[13px] w-[15px] h-[7px] bg-[#f5b800] text-black text-[6px] leading-[7px] font-bold text-center">PRE</span></div>
</div>
</body>
</html>
